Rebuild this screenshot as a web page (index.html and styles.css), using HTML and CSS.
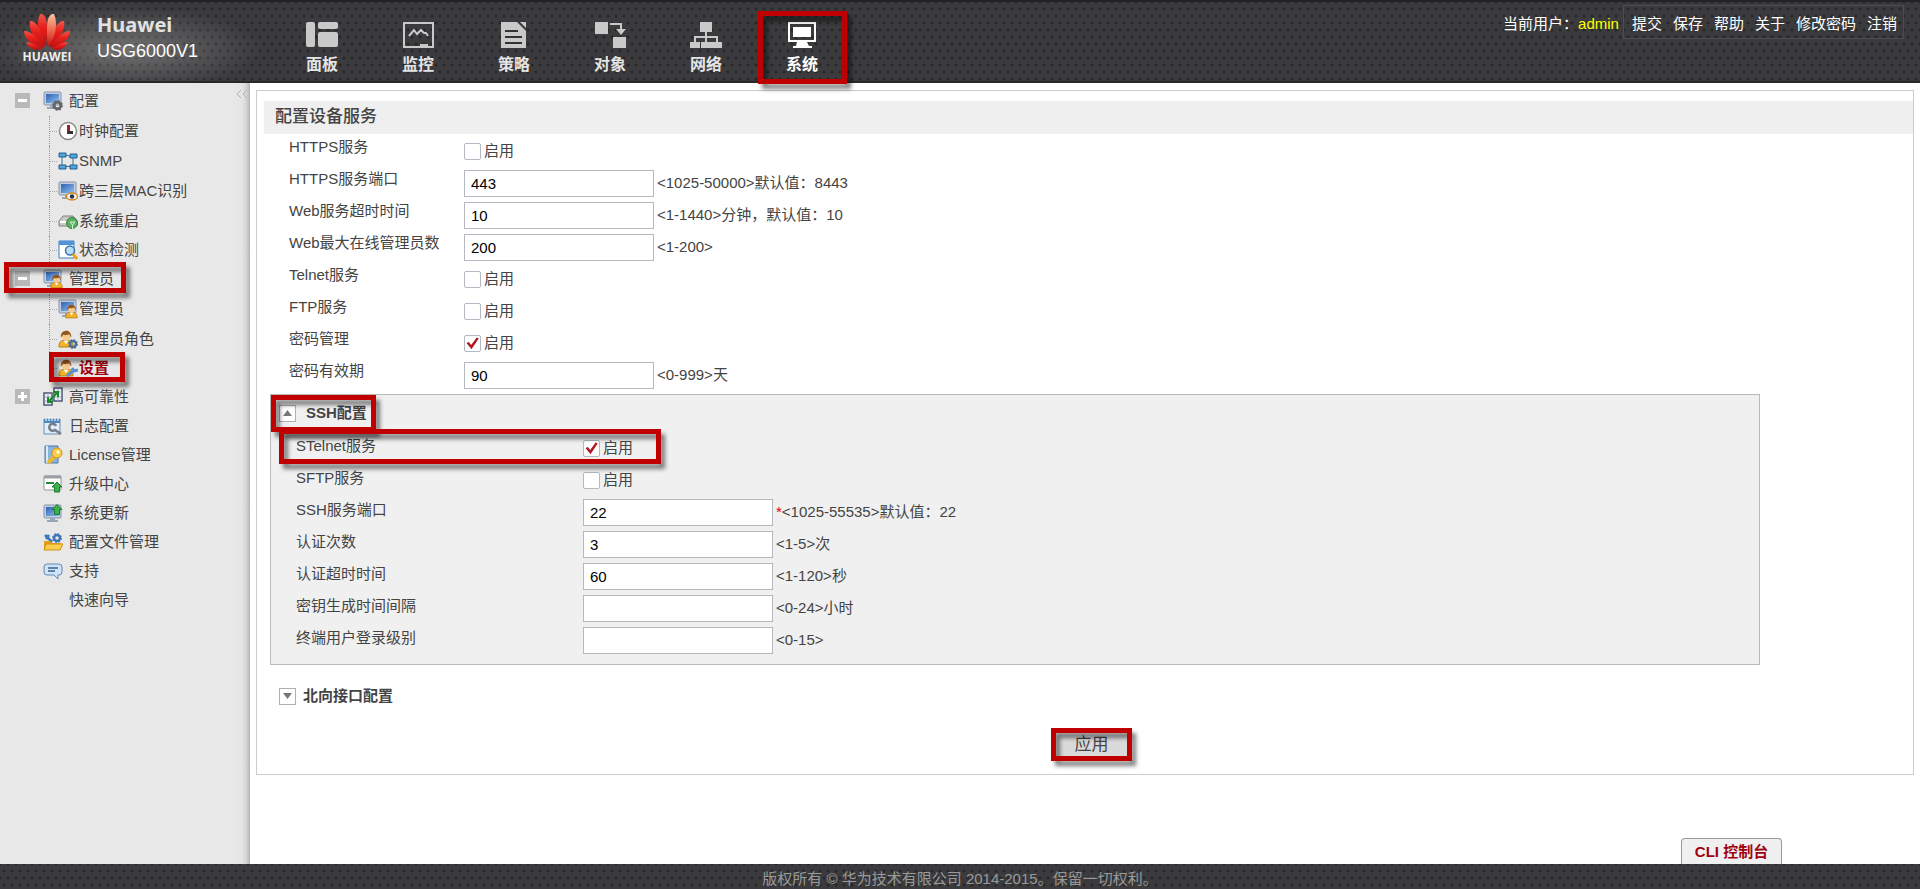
FILE: index.html
```html
<!DOCTYPE html>
<html lang="zh-CN">
<head>
<meta charset="utf-8">
<title>Huawei USG6000V1</title>
<link rel="stylesheet" href="styles.css">
</head>
<body>
<svg class="sprite" aria-hidden="true">
  <defs>
    <linearGradient id="screen" x1="0" y1="0" x2="1" y2="1"><stop offset="0" stop-color="#2f62b4"/><stop offset="1" stop-color="#8fc0f0"/></linearGradient>
    <linearGradient id="petal" x1="0" y1="0" x2="0" y2="1"><stop offset="0" stop-color="#f0564a"/><stop offset="0.4" stop-color="#e8211c"/><stop offset="1" stop-color="#b80f12"/></linearGradient>
    <linearGradient id="petal-light" x1="0" y1="0" x2="0" y2="1"><stop offset="0" stop-color="#fbc4a0"/><stop offset="0.5" stop-color="#ee6a50"/><stop offset="1" stop-color="#c81414"/></linearGradient>
  </defs>
  <symbol id="pc" viewBox="0 0 20 20"><rect x="1" y="1" width="17" height="13" rx="1" fill="#c3cedd" stroke="#8795ab"/><rect x="3" y="3" width="13" height="9" fill="url(#screen)"/><path d="M7 14h5v2h3v2H4v-2h3z" fill="#9aa5b5"/></symbol>
  <symbol id="person" viewBox="0 0 17 20"><path d="M1 19c0-5 2-7 5-7h5c3 0 5 2 5 7z" fill="#f0b429" stroke="#b97a14"/><path d="M6 12l2.500 4 2.500-4z" fill="#fff"/><circle cx="8.500" cy="7.500" r="4.500" fill="#f6c98f"/><path d="M3 9C2 0 15-1 14 9c-1-1-1.500-3-2-3.500C9 7 6 6 5.500 6 5 6.500 4 8 3 9z" fill="#94561d"/></symbol>
  <symbol id="gear" viewBox="0 0 10 10"><circle cx="5" cy="5" r="3" fill="none" stroke="currentColor" stroke-width="2.500"/><circle cx="5" cy="5" r="4.200" fill="none" stroke="currentColor" stroke-width="1.400" stroke-dasharray="1.700 1.600"/></symbol>
  <symbol id="up" viewBox="0 0 12 12"><path d="M6 1l5 5H8.500v5h-5V6H1z" fill="#3cb14a" stroke="#1b7a2b"/></symbol>
</svg>

<header class="header">
  <div class="brand">
    <div class="logo">
      <svg class="logo-mark" viewBox="0 0 48 36" aria-hidden="true">
        <g fill="url(#petal)">
          <path d="M23 33C15 25 13 9 17 1c5-1 7 6 7 14 0 7 0 13-1 18z"/>
          <path d="M22 34C13 29 5 17 7 8c5-1 10 7 12 13 2 5 3 9 3 13z"/>
          <path d="M21 35C11 34 1 26 1 18c5-1 11 5 15 9 3 3 4 5 5 8z"/>
          <path d="M19 36C12 39 5 34 3 29c5 0 11 3 16 7z"/>
          <path d="M26 34c9-5 17-17 15-26-5-1-10 7-12 13-2 5-3 9-3 13z"/>
          <path d="M27 35c10-1 20-9 20-17-5-1-11 5-15 9-3 3-4 5-5 8z"/>
          <path d="M29 36c7 3 14-2 16-7-5 0-11 3-16 7z"/>
        </g>
        <path d="M25 33c8-8 10-24 6-32-5-1-7 6-7 14 0 7 0 13 1 18z" fill="url(#petal-light)"/>
      </svg>
      <span class="logo-text">HUAWEI</span>
    </div>
    <div class="product"><strong class="product-name">Huawei</strong><span class="product-model">USG6000V1</span></div>
  </div>

  <nav class="nav">
    <a class="nav-item" href="#"><svg class="nav-icon" viewBox="0 0 34 28"><rect x="1" y="1" width="9" height="25" rx="2"/><rect x="13" y="1" width="20" height="7" rx="2"/><rect x="13" y="11" width="20" height="15" rx="2"/></svg>面板</a>
    <a class="nav-item" href="#"><svg class="nav-icon" viewBox="0 0 34 28"><path d="M2 1h31v26H2zM4 3v22h15v-2h8v2h4V3z" fill-rule="evenodd"/><path d="M8 15l5-6 3 4 4-4 3 3h2l2 3" fill="none" stroke="currentColor" stroke-width="2"/></svg>监控</a>
    <a class="nav-item" href="#"><svg class="nav-icon" viewBox="0 0 34 28"><path d="M4 1h16l9 9v17H4z"/><path d="M23 1h6v6z"/><path d="M8 10h13M8 16h17M8 22h17" stroke="#333" stroke-width="2"/></svg>策略</a>
    <a class="nav-item" href="#"><svg class="nav-icon" viewBox="0 0 34 28"><path d="M2 1h13v12H2zM20 16h13v11H20zM17 2h12v6h4l-5 6-5-6h4V4H17z"/></svg>对象</a>
    <a class="nav-item" href="#"><svg class="nav-icon" viewBox="0 0 34 28"><path d="M11 1h12v10h-5v4h11v6h4v6H22v-6h5v-4h-9v4h4v6H12v-6h4v-4H7v4h4v6H1v-6h4v-6h11v-4h-5z"/></svg>网络</a>
    <a class="nav-item nav-item--on" href="#"><svg class="nav-icon" viewBox="0 0 34 28"><path d="M3 1h28v20h-9l2 4h3v2H8v-2h3l1-4H3zM5 3v16h24V3z" fill-rule="evenodd"/><path d="M8 6h18v10H8z"/></svg>系统<span class="mark mark--nav"></span></a>
  </nav>

  <div class="user">
    <span>当前用户：<span class="user-name">admin</span></span>
    <div class="user-links"><a href="#">提交</a><a href="#">保存</a><a href="#">帮助</a><a href="#">关于</a><a href="#">修改密码</a><a href="#">注销</a></div>
  </div>
</header>

<div class="body">
  <aside class="side">
    <button class="side-fold" aria-label="收起"><svg viewBox="0 0 12 10"><path d="M5 1L1 5l4 4M11 1L7 5l4 4" fill="none" stroke="#b0b0b0"/></svg></button>
    <ul class="tree">
      <li>
        <div class="node"><button class="toggle" aria-label="折叠"></button><svg class="icon" viewBox="0 0 20 20"><use href="#pc"/><use href="#gear" x="9" y="9" width="11" height="11" color="#666"/></svg><a href="#">配置</a></div>
        <ul class="subtree">
          <li class="leaf"><svg class="icon" viewBox="0 0 20 20"><circle cx="10" cy="10" r="8.500" fill="#fff" stroke="#8b8b8b" stroke-width="1.500"/><path d="M9 4h3v9H9z" fill="#a51c26"/><path d="M10 10h5v3h-5z" fill="#333"/></svg><a href="#">时钟配置</a></li>
          <li class="leaf"><svg class="icon" viewBox="0 0 20 20"><path d="M4 5v11M15 5v11M5 3l9 3M5 16l10-1" stroke="#3a6d94" fill="none"/><path d="M1 2h7v4H1zM12 3h7v4h-7zM1 14h7v4H1zM12 14h7v4h-7z" fill="#51a6dc" stroke="#245f8c"/></svg><a href="#">SNMP</a></li>
          <li class="leaf"><svg class="icon" viewBox="0 0 20 20"><use href="#pc"/><ellipse cx="14" cy="15.500" rx="5.500" ry="3.500" fill="#fff" stroke="#d28a1c" stroke-width="1.500"/><circle cx="14" cy="15.500" r="2.300" fill="#2a3550"/></svg><a href="#">跨三层MAC识别</a></li>
          <li class="leaf"><svg class="icon" viewBox="0 0 20 20"><path d="M1 10l4-5h10l4 5v5H1z" fill="#c9c9c9" stroke="#808080"/><path d="M2 11h10" stroke="#fff" stroke-width="2"/><circle cx="14" cy="12" r="5.500" fill="#5bb05f" stroke="#36833e"/><path d="M12 11h5l-2.500 3zM14.500 14v5" stroke="#d8f0d8" fill="none"/></svg><a href="#">系统重启</a></li>
          <li class="leaf"><svg class="icon" viewBox="0 0 20 20"><path d="M1 1h15v17H1z" fill="#fff" stroke="#3e7fc0"/><path d="M1 1h15v4H1z" fill="#4d94d8"/><circle cx="12" cy="10.500" r="4.500" fill="#b9dcf5" stroke="#3f75ab" stroke-width="1.500"/><path d="M15 14l4 5" stroke="#e9a51f" stroke-width="3"/></svg><a href="#">状态检测</a></li>
        </ul>
      </li>
      <li>
        <div class="node"><button class="toggle" aria-label="折叠"></button><svg class="icon" viewBox="0 0 20 20"><use href="#pc"/><use href="#person" x="7" y="4" width="13" height="16"/></svg><a href="#">管理员</a><span class="mark mark--admin"></span></div>
        <ul class="subtree">
          <li class="leaf"><svg class="icon" viewBox="0 0 20 20"><use href="#pc"/><use href="#person" x="7" y="4" width="13" height="16"/></svg><a href="#">管理员</a></li>
          <li class="leaf"><svg class="icon" viewBox="0 0 20 20"><use href="#person" width="16" height="19"/><use href="#gear" x="10" y="10" width="10" height="10" color="#4c7199"/></svg><a href="#">管理员角色</a></li>
          <li class="leaf leaf--on"><svg class="icon" viewBox="0 0 20 20"><use href="#person" width="16" height="19"/><path d="M9 18l7-6M14 10l2 3 4-1" stroke="#5b8fd0" stroke-width="3" fill="none"/></svg><a href="#">设置</a><span class="mark mark--leaf"></span></li>
        </ul>
      </li>
      <li class="node"><button class="toggle toggle--plus" aria-label="展开"></button><svg class="icon" viewBox="0 0 20 20"><path d="M1 6h8v12H1zM11 1h8v13h-8z" fill="#f2f4fa" stroke="#4c5573" stroke-width="1.500"/><path d="M1 10h8M1 14h8M11 5h8M11 10h8M5 6v12M15 1v13" stroke="#9aa3bb"/><path d="M6 14l8-8M10 5h5v5M5 10v5h5" stroke="#1c8a2a" stroke-width="2" fill="none"/></svg><a href="#">高可靠性</a></li>
      <li class="node"><svg class="icon" viewBox="0 0 20 20"><path d="M1 3h16v15H1z" fill="#dfeefa" stroke="#6d8fb0"/><path d="M1 3h16v4H1z" fill="#4f88c0"/><path d="M3 1v4M6 1v4M9 1v4M12 1v4M15 1v4" stroke="#fff"/><path d="M13 10a3.500 3.500 0 1 0-1 4l6 4" stroke="#777d86" stroke-width="2.500" fill="none"/></svg><a href="#">日志配置</a></li>
      <li class="node"><svg class="icon" viewBox="0 0 20 20"><path d="M2 1h13v17H2z" fill="#8ab4dd" stroke="#4a78a8"/><path d="M4 1v17" stroke="#dcebf8" stroke-width="2"/><path d="M12 11l-7 7" stroke="#edb52c" stroke-width="4"/><circle cx="14" cy="8" r="5" fill="#f9cf4c" stroke="#cf9420"/><circle cx="15" cy="7" r="1.500" fill="#fff"/></svg><a href="#">License管理</a></li>
      <li class="node"><svg class="icon" viewBox="0 0 20 20"><rect x="1" y="2" width="17" height="14" rx="1" fill="#fff" stroke="#8d9399"/><path d="M1 3h17" stroke="#9aa0a6" stroke-width="3"/><path d="M3 9h8" stroke="#1e8a30" stroke-width="2"/><use href="#up" x="8" y="6" width="12" height="14"/></svg><a href="#">升级中心</a></li>
      <li class="node"><svg class="icon" viewBox="0 0 20 20"><use href="#pc" y="1"/><use href="#up" x="8" width="12" height="13"/></svg><a href="#">系统更新</a></li>
      <li class="node"><svg class="icon" viewBox="0 0 20 20"><path d="M2 3l7 7M3 7l3-4" stroke="#3c78b5" stroke-width="2.500"/><use href="#gear" x="9" y="1" width="10" height="10" color="#3c78b5"/><path d="M1 9h6l2 2h9v7H1z" fill="#e7a01c"/><path d="M3 12h17l-3 6H1z" fill="#fbcf4e" stroke="#cf8f16"/></svg><a href="#">配置文件管理</a></li>
      <li class="node"><svg class="icon" viewBox="0 0 20 20"><path d="M4 3h12q3 0 3 3v5q0 3-3 3h-1v4l-4-4H4q-3 0-3-3V6q0-3 3-3z" fill="#cfe3f8" stroke="#6288b0"/><path d="M5 7h10M5 10h7" stroke="#3c6290" stroke-width="1.500"/></svg><a href="#">支持</a></li>
      <li class="node"><a href="#">快速向导</a></li>
    </ul>
  </aside>

  <main class="main">
    <form class="panel">
      <h1 class="title">配置设备服务</h1>
      <div class="rows">
        <div class="row"><label class="label" for="https">HTTPS服务</label><div class="field"><input type="checkbox" id="https"><label for="https">启用</label></div></div>
        <div class="row"><label class="label" for="port">HTTPS服务端口</label><div class="field"><input class="text" id="port" type="text" value="443"><span>&lt;1025-50000&gt;默认值：8443</span></div></div>
        <div class="row"><label class="label" for="timeout">Web服务超时时间</label><div class="field"><input class="text" id="timeout" type="text" value="10"><span>&lt;1-1440&gt;分钟，默认值：10</span></div></div>
        <div class="row"><label class="label" for="max">Web最大在线管理员数</label><div class="field"><input class="text" id="max" type="text" value="200"><span>&lt;1-200&gt;</span></div></div>
        <div class="row"><label class="label" for="telnet">Telnet服务</label><div class="field"><input type="checkbox" id="telnet"><label for="telnet">启用</label></div></div>
        <div class="row"><label class="label" for="ftp">FTP服务</label><div class="field"><input type="checkbox" id="ftp"><label for="ftp">启用</label></div></div>
        <div class="row"><label class="label" for="pwd">密码管理</label><div class="field"><input type="checkbox" id="pwd" checked><label for="pwd">启用</label></div></div>
        <div class="row"><label class="label" for="days">密码有效期</label><div class="field"><input class="text" id="days" type="text" value="90"><span>&lt;0-999&gt;天</span></div></div>
      </div>

      <section class="ssh">
        <h2 class="section-title section-title--ssh"><button type="button" class="arrow arrow--up" aria-label="收起"></button>SSH配置<span class="mark mark--ssh"></span></h2>
        <div class="rows rows--ssh">
          <div class="row"><label class="label" for="stelnet">STelnet服务</label><div class="field"><input type="checkbox" id="stelnet" checked><label for="stelnet">启用</label></div><span class="mark mark--row"></span></div>
          <div class="row"><label class="label" for="sftp">SFTP服务</label><div class="field"><input type="checkbox" id="sftp"><label for="sftp">启用</label></div></div>
          <div class="row"><label class="label" for="sshport">SSH服务端口</label><div class="field"><input class="text" id="sshport" type="text" value="22"><span><span class="required">*</span>&lt;1025-55535&gt;默认值：22</span></div></div>
          <div class="row"><label class="label" for="tries">认证次数</label><div class="field"><input class="text" id="tries" type="text" value="3"><span>&lt;1-5&gt;次</span></div></div>
          <div class="row"><label class="label" for="authtime">认证超时时间</label><div class="field"><input class="text" id="authtime" type="text" value="60"><span>&lt;1-120&gt;秒</span></div></div>
          <div class="row"><label class="label" for="keygen">密钥生成时间间隔</label><div class="field"><input class="text" id="keygen" type="text"><span>&lt;0-24&gt;小时</span></div></div>
          <div class="row"><label class="label" for="level">终端用户登录级别</label><div class="field"><input class="text" id="level" type="text"><span>&lt;0-15&gt;</span></div></div>
        </div>
      </section>

      <h2 class="section-title section-title--north"><button type="button" class="arrow arrow--down" aria-label="展开"></button>北向接口配置</h2>
      <div class="actions"><button type="button" class="apply">应用<span class="mark mark--apply"></span></button></div>
    </form>
    <button class="cli">CLI 控制台</button>
  </main>
</div>

<footer class="footer">版权所有 © 华为技术有限公司 2014-2015。保留一切权利。</footer>
</body>
</html>
```
FILE: styles.css
```css
* { box-sizing: border-box; }

body {
  margin: 0;
  min-height: 100vh;
  display: flex;
  flex-direction: column;
  background: #fff;
  color: #444;
  font: 15px/20px "Liberation Sans", "Noto Sans CJK SC", sans-serif;
}

a { color: inherit; text-decoration: none; }
ul { list-style: none; margin: 0; padding: 0; }
button { font: inherit; padding: 0; cursor: pointer; }
.sprite { position: absolute; width: 0; height: 0; }

.header, .footer {
  background-color: #3b3b3d;
  background-image:
    radial-gradient(circle, #28282a 1px, transparent 2px),
    radial-gradient(circle, #28282a 1px, transparent 2px);
  background-size: 8px 14px;
  background-position: 0 0, 4px 7px;
}

/* Header */
.header {
  display: flex;
  align-items: flex-start;
  height: 83px;
  border-top: 2px solid #222;
  border-bottom: 2px solid #2b2729;
}
.brand {
  width: 274px;
  height: 79px;
  display: flex;
  gap: 24px;
  padding: 10px 0 0 21px;
  background: radial-gradient(ellipse at 45% 60%, rgba(255, 255, 255, 0.28), transparent 65%);
}
.logo { width: 52px; display: flex; flex-direction: column; align-items: center; }
.logo-mark { width: 48px; height: 38px; overflow: visible; }
.logo-text { font: bold 12px/14px "Open Sans", sans-serif; color: #eee; }
.product { display: flex; flex-direction: column; color: #fff; }
.product-name { font: bold 20px/26px "Noto Sans", sans-serif; color: #e2e2e2; }
.product-model { font-size: 18px; line-height: 26px; }

.nav { display: flex; flex: 1; }
.nav-item {
  position: relative;
  width: 96px;
  padding-top: 19px;
  display: flex;
  flex-direction: column;
  align-items: center;
  gap: 4px;
  color: #e4e4e4;
  font-size: 16px;
  line-height: 24px;
  font-weight: bold;
}
.nav-icon { width: 34px; height: 28px; fill: #c9c9c9; color: #c9c9c9; }
.nav-item--on { color: #fff; }
.nav-item--on .nav-icon { fill: #fff; }

.user { display: flex; align-items: center; gap: 4px; padding: 3px 16px 0 0; color: #fff; }
.user-name { color: #ff0; }
.user-links {
  display: flex;
  gap: 11px;
  padding: 8px 6px 4px 8px;
  border: 1px solid #4d4d4f;
}
.user > span { padding-top: 4px; }

/* Layout */
.body { flex: 1; display: flex; }

/* Sidebar */
.side {
  position: relative;
  width: 250px;
  flex: none;
  padding-top: 3px;
  background: linear-gradient(to left, #b5b5b5, #d6d6d6 4px, #e4e4e4 8px, #e8e8e8 16px);
}
.side-fold {
  position: absolute;
  top: 6px;
  right: 2px;
  width: 12px;
  height: 10px;
  display: flex;
  border: 0;
  background: none;
}
.node {
  position: relative;
  display: flex;
  align-items: center;
  height: 29px;
  padding-left: 69px;
}
.node .icon { margin-left: -26px; margin-right: 6px; }
.icon { width: 20px; height: 20px; flex: none; }
.toggle {
  width: 15px;
  height: 15px;
  margin-left: -54px;
  margin-right: 39px;
  border: 0;
  background: linear-gradient(#fff, #fff) center / 9px 3px no-repeat #b9b9b9;
}
.toggle--plus {
  background:
    linear-gradient(#fff, #fff) center / 9px 3px no-repeat,
    linear-gradient(#fff, #fff) center / 3px 9px no-repeat #b9b9b9;
}
.subtree { padding-top: 1px; }
.leaf {
  position: relative;
  display: flex;
  align-items: center;
  gap: 1px;
  height: 30px;
  margin-left: 49px;
  padding-left: 8px;
  border-left: 1px dotted #999;
  background: repeating-linear-gradient(to right, #aaa 0 1px, transparent 1px 2px) 0 50% / 8px 1px no-repeat;
}
.leaf:last-child { height: 28px; }
.leaf--on { color: #a00010; font-weight: bold; }

/* Content */
.main { flex: 1; display: flex; flex-direction: column; padding: 7px 6px 0 6px; }
.panel { padding: 10px 0 16px 7px; border: 1px solid #ccc; }
.title {
  margin: 0;
  padding: 3px 11px 4px;
  background: #efefef;
  color: #444;
  font-size: 17px;
  line-height: 26px;
  font-weight: 500;
}
.rows { padding: 1px 0 0 25px; }
.row { position: relative; display: flex; min-height: 32px; }
.label { width: 175px; padding-top: 2px; }
.field { display: flex; align-items: center; gap: 3px; }
.text {
  width: 190px;
  height: 27px;
  padding: 0 6px;
  border: 1px solid #b5b8c0;
  background: #fff;
  color: #000;
  font: inherit;
}
input[type="checkbox"] {
  appearance: none;
  width: 17px;
  height: 17px;
  margin: 0;
  border: 1px solid #b5b8c0;
  border-radius: 2px;
  background: #fff;
  display: grid;
  place-items: center;
}
input[type="checkbox"]:checked::before {
  content: "";
  width: 13px;
  height: 13px;
  background: #b01822;
  clip-path: polygon(4% 50%, 22% 42%, 40% 65%, 82% 8%, 98% 16%, 42% 98%);
}
.required { color: #e00000; }

.ssh {
  margin: 3px 153px 0 6px;
  padding-bottom: 8px;
  border: 1px solid #b9b9b9;
  background: #f0f0f0;
}
.section-title {
  position: relative;
  display: flex;
  align-items: center;
  margin: 0;
  font-size: 15px;
  line-height: 20px;
}
.section-title--ssh { height: 36px; padding-left: 8px; gap: 10px; }
.section-title--north { padding: 21px 0 0 15px; gap: 7px; }
.rows--ssh { padding-left: 25px; }
.rows--ssh .label { width: 287px; padding-top: 4px; }

.arrow {
  width: 17px;
  height: 17px;
  border: 1px solid #b0b0b0;
  background: #fff;
  display: grid;
  place-items: center;
}
.arrow::before {
  content: "";
  width: 9px;
  height: 6px;
  background: #777;
  clip-path: polygon(50% 0, 100% 100%, 0 100%);
}
.arrow--down::before { clip-path: polygon(0 0, 100% 0, 50% 100%); }

.actions { display: flex; justify-content: center; padding: 25px 0 0 6px; }
.apply {
  position: relative;
  width: 75px;
  height: 27px;
  border: 0;
  background: #dadada;
  color: #444;
  font-size: 17px;
}

.cli {
  align-self: flex-end;
  margin: auto 132px 0 0;
  width: 101px;
  height: 26px;
  border: 1px solid #999;
  border-bottom: 0;
  border-radius: 4px 4px 0 0;
  background: #f0f0f0;
  color: #a00010;
  font-weight: bold;
}

.footer { height: 25px; padding-top: 5px; line-height: 20px; text-align: center; color: #999; }

/* Red highlight frames */
.mark {
  position: absolute;
  z-index: 1;
  border: 5px solid #c00000;
  filter: drop-shadow(4px 5px 2px rgba(0, 0, 0, 0.5));
  pointer-events: none;
}
.mark--nav { inset: 9px 3px -7px 4px; }
.mark--admin { left: 4px; top: -2px; width: 122px; height: 31px; }
.mark--leaf { left: -1px; top: -2px; width: 76px; height: 30px; }
.mark--ssh { left: 0; top: 0; width: 105px; height: 37px; }
.mark--row { left: -17px; top: -3px; width: 382px; height: 35px; }
.mark--apply { inset: -3px; }
```
